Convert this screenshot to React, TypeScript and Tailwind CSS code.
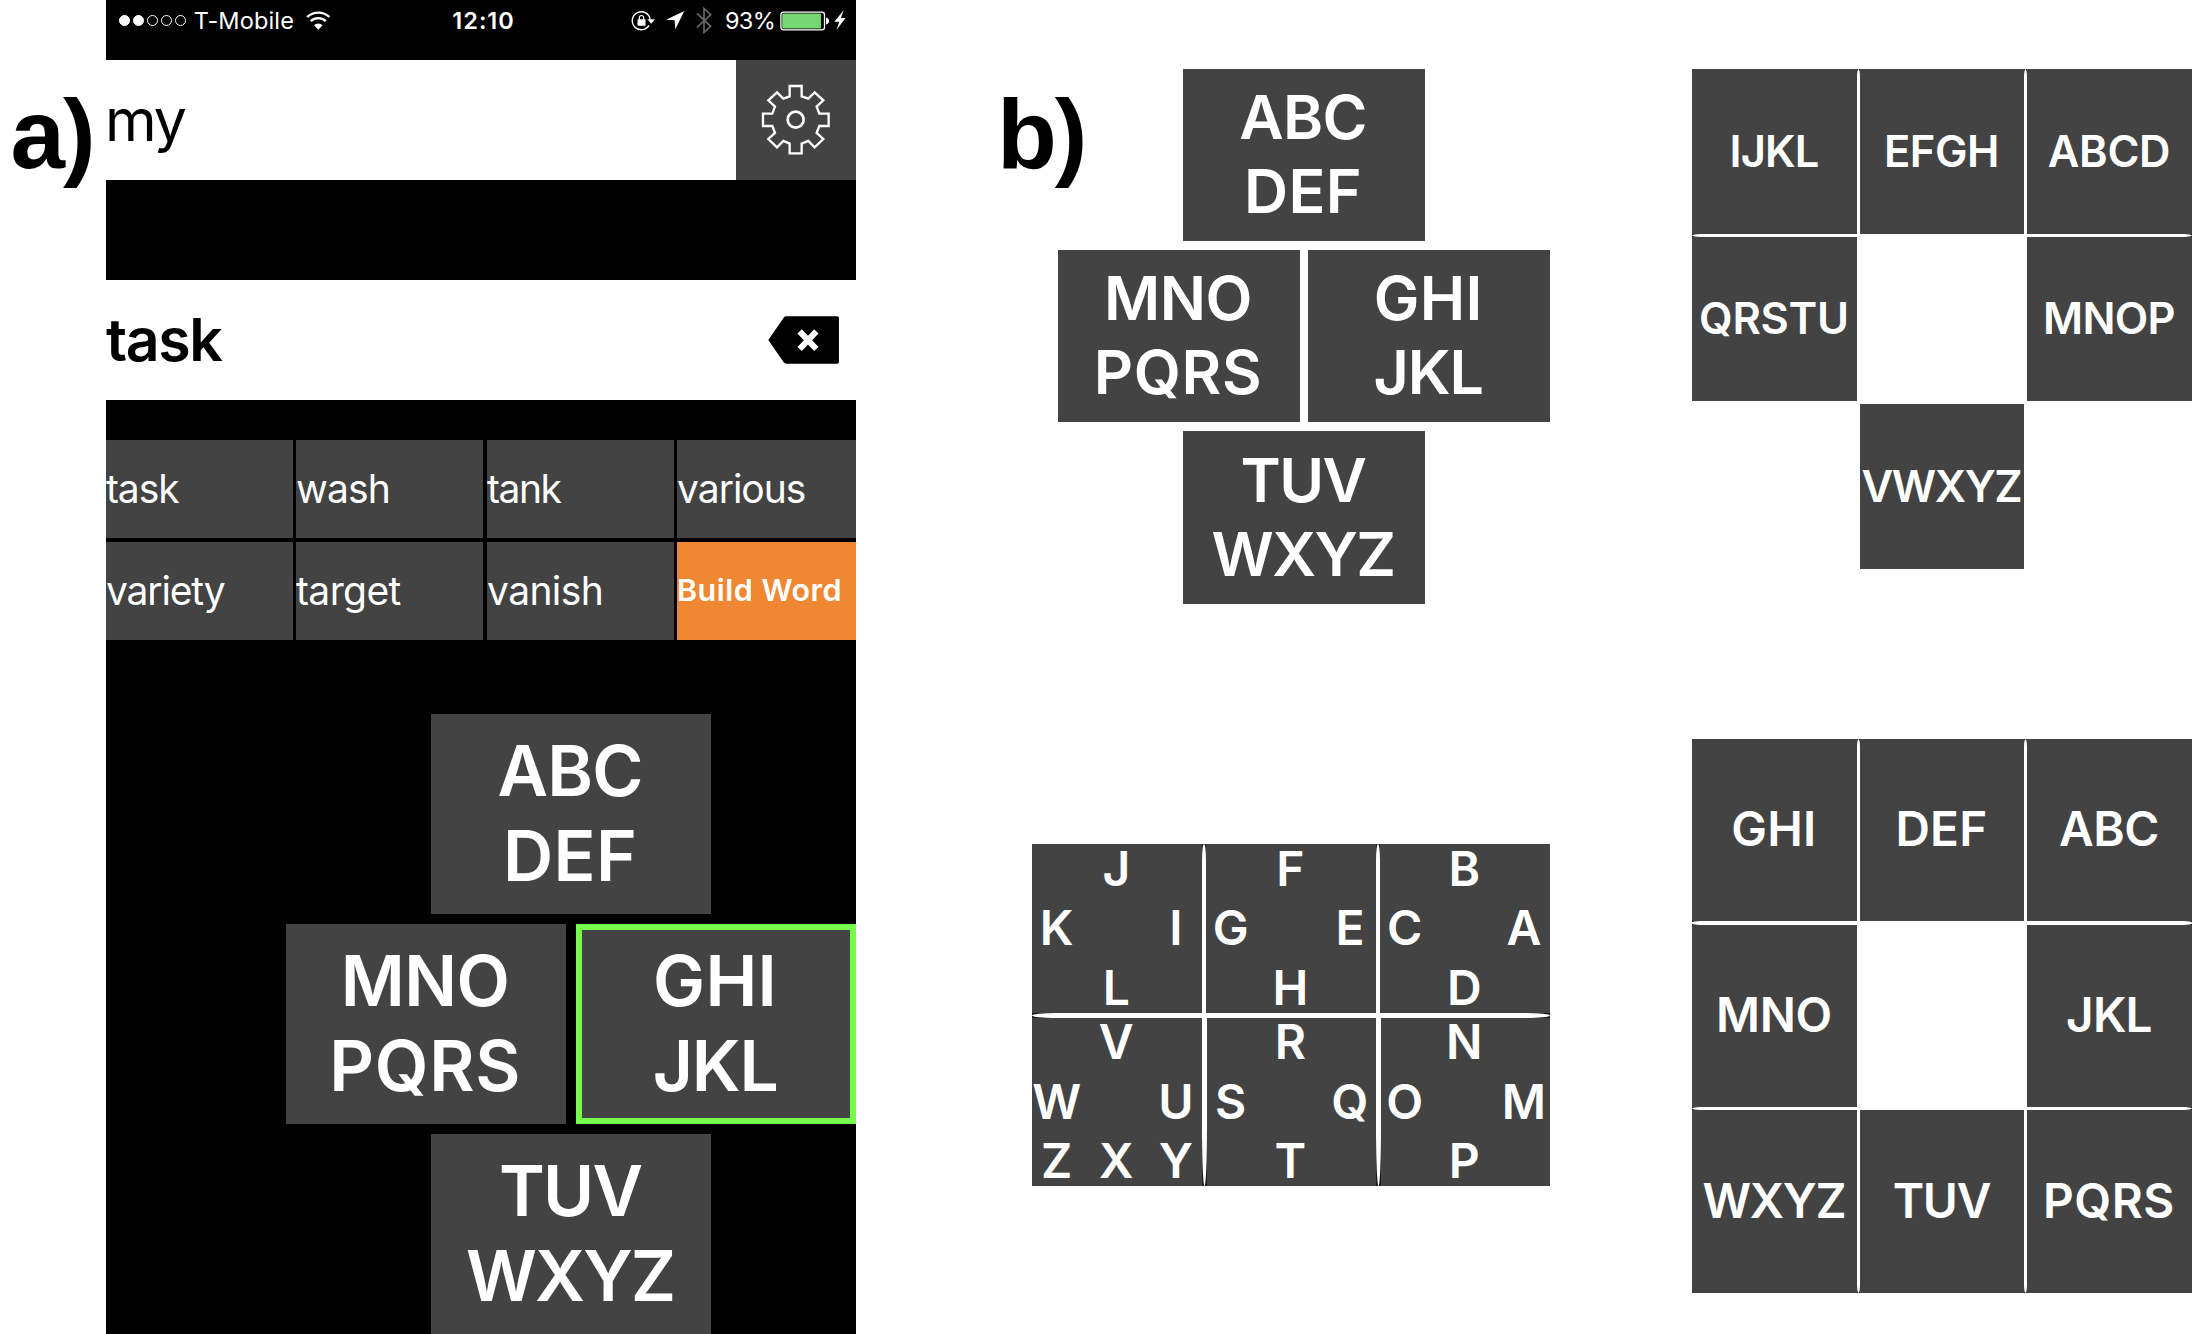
import type { ReactNode } from "react";

const TRACKING: Record<string, string> = {
  ABC: "tracking-[-0.01em]",
  DEF: "tracking-[0.005em]",
  MNO: "tracking-[-0.008em]",
  PQRS: "tracking-[0.01em]",
  GHI: "tracking-[0.005em]",
  JKL: "tracking-[-0.017em]",
  TUV: "tracking-[-0.026em]",
  WXYZ: "tracking-[-0.027em]",
  IJKL: "tracking-[-0.02em]",
  EFGH: "tracking-[-0.011em]",
  ABCD: "tracking-[-0.008em]",
  QRSTU: "tracking-[-0.006em]",
  MNOP: "tracking-[-0.017em]",
  VWXYZ: "tracking-[-0.032em]",
};

function Letters({ text }: { text: string }) {
  return <span className={`whitespace-nowrap ${TRACKING[text] ?? "tracking-normal"}`}>{text}</span>;
}

function Tile({ lines, className = "" }: { lines: string[]; className?: string }) {
  return (
    <div className={`flex shrink-0 flex-col items-center justify-center bg-[#434343] pr-[0.025em] font-semibold text-white ${className}`}>
      {lines.map((line) => (
        <Letters key={line} text={line} />
      ))}
    </div>
  );
}

/* ---------- status bar icons ---------- */

function WifiIcon() {
  return (
    <svg viewBox="19 32 74 57" className="h-[19px] w-[24.6px]" fill="none" stroke="#fff" strokeWidth="7">
      <path d="M22.5 50 A49 49 0 0 1 89.5 50" />
      <path d="M33.5 62.5 A32.5 32.5 0 0 1 78.5 62.5" />
      <path d="M43 75 A18 18 0 0 1 69 75 L56 88 Z" fill="#fff" stroke="none" />
    </svg>
  );
}

function RotationLockIcon() {
  return (
    <svg viewBox="31 28 72 64" className="h-[21.3px] w-6" fill="none" stroke="#fff">
      <path d="M88.5 57 A27 27 0 1 0 85 74" strokeWidth="4" />
      <path d="M80 56 H103 L91.5 69 Z" fill="#fff" stroke="none" />
      <rect x="50.5" y="56" width="24" height="19" rx="2" fill="#fff" stroke="none" />
      <path d="M56 57 V51 A6.5 6.5 0 0 1 69 51 V57" strokeWidth="3.5" />
    </svg>
  );
}

function LocationIcon() {
  return (
    <svg viewBox="138 35 55 55" className="size-[18.3px]" fill="#fff">
      <path d="M193 35 L138 61 L164 63 L166 90 Z" />
    </svg>
  );
}

function BluetoothIcon() {
  return (
    <svg viewBox="227 18 48 86" className="h-[28.6px] w-4" fill="none" stroke="#666" strokeWidth="5">
      <path d="M230 40 L271 79 L251 97 V25 L271 44 L230 82" />
    </svg>
  );
}

function BatteryIcon() {
  return (
    <svg viewBox="0 0 49 20" className="h-5 w-[49px]">
      <rect x="0.9" y="1.1" width="43.6" height="17.8" rx="2.6" fill="none" stroke="#fff" strokeWidth="1.3" />
      <rect x="2.2" y="2.4" width="38.8" height="15.2" rx="1" fill="#76d672" />
      <path d="M46 6.6 Q49 7.4 49 10 Q49 12.6 46 13.4 Z" fill="#fff" />
    </svg>
  );
}

function BoltIcon() {
  return (
    <svg viewBox="644 30 36 61" className="h-[20.3px] w-3" fill="#fff">
      <path d="M673 31 L645 65 H660 L651 90 L679 54 H665 Z" />
    </svg>
  );
}

function GearIcon() {
  return (
    <svg viewBox="990 250 214 220" className="h-[73.3px] w-[71.3px]" fill="none" stroke="#fff" strokeWidth="7">
      <path d="M1079 259 H1115 V290 L1135 297 L1154 278 L1180 302 L1160 321 L1168 342 H1196 V379 H1168 L1160 400 L1180 418 L1154 443 L1135 424 L1115 432 V461 H1079 V432 L1060 424 L1041 443 L1015 418 L1035 400 L1027 379 H999 V342 H1027 L1035 321 L1015 302 L1041 278 L1060 297 L1079 290 Z" />
      <circle cx="1097" cy="360" r="24" strokeWidth="8" />
    </svg>
  );
}

function BackspaceIcon() {
  return (
    <svg viewBox="23 32 214 144" className="h-12 w-[71.3px]">
      <path d="M24 104 L70 37 Q73 33 78 33 H230 Q236 33 236 39 V169 Q236 175 230 175 H78 Q73 175 70 171 Z" fill="#000" />
      <path d="M118 78 L168 131 M168 78 L118 131" stroke="#fff" strokeWidth="18" />
    </svg>
  );
}

/* ---------- phone ---------- */

function StatusBar() {
  return (
    <div className="flex h-[60px] items-start text-[23.5px] leading-[41px] text-white">
      <div className="flex h-[41px] w-[346.3px] items-center pl-[12.6px]">
        <div className="flex gap-[2.7px]">
          {[true, true, false, false, false].map((full, i) => (
            <span
              key={i}
              className={`size-[11.3px] rounded-full border border-white ${full ? "bg-white" : ""}`}
            />
          ))}
        </div>
        <span className="ml-2 w-[112.5px] tracking-[0.14px]">T-Mobile</span>
        <WifiIcon />
      </div>
      <span className="font-semibold tracking-[1px]">12:10</span>
      <div className="flex h-[41px] flex-1 items-center justify-end pr-[9.7px]">
        <RotationLockIcon />
        <span className="w-[11.5px]" />
        <LocationIcon />
        <span className="w-[11.4px]" />
        <BluetoothIcon />
        <span className="mr-[5px] ml-[13px] tracking-[-0.7px]">93%</span>
        <BatteryIcon />
        <span className="w-[5.3px]" />
        <BoltIcon />
      </div>
    </div>
  );
}

const SUGGESTIONS: [string, string][] = [
  ["task", "tracking-[-1.1px]"],
  ["wash", "tracking-[-0.9px]"],
  ["tank", "border-l border-black tracking-[-1.45px]"],
  ["various", "tracking-[-1px]"],
  ["variety", "tracking-[-1.15px]"],
  ["target", "tracking-[-0.6px]"],
  ["vanish", "border-l border-black tracking-[-0.6px]"],
];

function Phone() {
  return (
    <div className="flex h-[1334px] w-[750px] shrink-0 flex-col overflow-hidden bg-black">
      <StatusBar />
      <div className="flex h-[120px] bg-white">
        <div className="flex flex-1 items-center pb-px text-[59px] leading-none tracking-[-2.1px] text-black">
          <span className="-ml-px">my</span>
        </div>
        <div className="flex w-[120px] items-center justify-center bg-[#434343]">
          <GearIcon />
        </div>
      </div>
      <div className="mt-[100px] flex h-[120px] items-center justify-between bg-white pr-[17.2px]">
        <span className="pb-px text-[59px] leading-none font-semibold tracking-[-1.4px] text-black">task</span>
        <BackspaceIcon />
      </div>
      <div className="mt-10 grid grid-cols-[187px_187px_188px_179px] grid-rows-[98px_98px] gap-x-[3px] gap-y-1">
        {SUGGESTIONS.map(([word, style]) => (
          <div key={word} className={`flex items-center bg-[#434343] pb-px text-[39px] leading-none text-white ${style}`}>
            {word}
          </div>
        ))}
        <div className="flex items-center bg-[#ef8733] pb-px text-[30.5px] leading-none font-semibold tracking-[0.5px] whitespace-nowrap text-white">
          Build Word
        </div>
      </div>
      <div className="mt-[74px] flex flex-col gap-[10px] text-[69.5px] leading-[85px]">
        <Tile lines={["ABC", "DEF"]} className="ml-[325px] h-[200px] w-[280px]" />
        <div className="ml-[180px] flex gap-[10px]">
          <Tile lines={["MNO", "PQRS"]} className="h-[200px] w-[280px]" />
          <Tile lines={["GHI", "JKL"]} className="h-[200px] w-[280px] border-[6px] border-[#76fc4c]" />
        </div>
        <Tile lines={["TUV", "WXYZ"]} className="ml-[325px] h-[200px] w-[280px]" />
      </div>
    </div>
  );
}

/* ---------- keyboard layouts ---------- */

function FigureLabel({ children, className = "" }: { children: ReactNode; className?: string }) {
  return (
    <span className={`block font-['Liberation_Sans',sans-serif] text-[98px] leading-[100px] font-bold text-black ${className}`}>
      {children}
    </span>
  );
}

function FourKeyLayout() {
  return (
    <div className="flex flex-col gap-[9px] text-[61px] leading-[73.4px]">
      <div className="flex">
        <FigureLabel className="w-[185.5px] pt-[14.5px] tracking-[-2px]">b)</FigureLabel>
        <Tile lines={["ABC", "DEF"]} className="h-[171.5px] w-[242.5px]" />
      </div>
      <div className="ml-[61px] flex gap-[8.5px]">
        <Tile lines={["MNO", "PQRS"]} className="h-[172.5px] w-[241.5px]" />
        <Tile lines={["GHI", "JKL"]} className="h-[172.5px] w-[242px]" />
      </div>
      <Tile lines={["TUV", "WXYZ"]} className="ml-[185.5px] h-[173px] w-[242.5px]" />
    </div>
  );
}

/* White divider whose ends narrow to a point over the dark keys. */
function Seam({ className, taper }: { className: string; taper: string }) {
  return (
    <div className={`absolute bg-[#1c1c1c] ${className}`}>
      <div className={`size-full bg-white ${taper}`} />
    </div>
  );
}

const SIX_KEYS: string[][] = [
  ["", "J", "", "K", "", "I", "", "L", ""],
  ["", "F", "", "G", "", "E", "", "H", ""],
  ["", "B", "", "C", "", "A", "", "D", ""],
  ["", "V", "", "W", "", "U", "Z", "X", "Y"],
  ["", "R", "", "S", "", "Q", "", "T", ""],
  ["", "N", "", "O", "", "M", "", "P", ""],
];

function SixKeyLayout() {
  return (
    <div className="relative ml-[35px] grid w-[518px] grid-cols-[170px_170px_170px] grid-rows-[168.5px_168.5px] gap-x-[4px] gap-y-[5px] bg-white">
      {SIX_KEYS.map((key, k) => (
        <div
          key={k}
          className="grid grid-cols-[59.6px_59.6px_59.6px] grid-rows-[59.6px_59.6px_59.6px] content-center justify-center bg-[#434343] pr-[1.4px] text-[48px] leading-none font-semibold text-white"
        >
          {key.map((letter, i) => (
            <span key={i} className="flex items-center justify-center">
              {letter}
            </span>
          ))}
        </div>
      ))}
      <Seam className="top-0 left-[170px] h-[170px] w-[4px]" taper="[border-radius:2px_2px_0_0/16px_16px_0_0]" />
      <Seam className="top-0 left-[344px] h-[170px] w-[4px]" taper="[border-radius:2px_2px_0_0/16px_16px_0_0]" />
      <Seam className="top-[172px] left-[169.5px] h-[170px] w-[5px]" taper="[border-radius:0_0_2.5px_2.5px/0_0_60px_60px]" />
      <Seam className="top-[172px] left-[343.5px] h-[170px] w-[5px]" taper="[border-radius:0_0_2.5px_2.5px/0_0_60px_60px]" />
      <Seam className="top-[168.5px] left-0 h-[5px] w-[518px]" taper="[border-radius:24px/2.5px]" />
    </div>
  );
}

function SevenKeyLayout() {
  return (
    <div className="relative grid grid-cols-[165px_164px_165px] grid-rows-[164.5px_164.5px_164.5px] gap-[3px] text-[43.5px] leading-none">
      {["IJKL", "EFGH", "ABCD", "QRSTU", "", "MNOP", "", "VWXYZ", ""].map((keys, i) =>
        keys ? <Tile key={i} lines={[keys]} /> : <div key={i} />,
      )}
      <Seam className="top-0 left-[165px] h-[165px] w-[3px]" taper="[border-radius:1.5px_1.5px_0_0/8px_8px_0_0]" />
      <Seam className="top-0 left-[332px] h-[165px] w-[3px]" taper="[border-radius:1.5px_1.5px_0_0/8px_8px_0_0]" />
      <Seam className="top-[164.5px] left-0 h-[3px] w-[500px]" taper="[border-radius:8px/1.5px]" />
    </div>
  );
}

function EightKeyLayout() {
  return (
    <div className="relative grid grid-cols-[165px_164px_165px] grid-rows-[182.5px_182.5px_182.5px] gap-x-[3px] gap-y-[3.3px] text-[47.7px] leading-none">
      {["GHI", "DEF", "ABC", "MNO", "", "JKL", "WXYZ", "TUV", "PQRS"].map((keys, i) =>
        keys ? <Tile key={i} lines={[keys]} /> : <div key={i} />,
      )}
      <Seam className="top-0 left-[165px] h-[554px] w-[3px]" taper="[border-radius:1.5px/8px]" />
      <Seam className="top-0 left-[332px] h-[554px] w-[3px]" taper="[border-radius:1.5px/8px]" />
      <Seam className="top-[182.5px] left-0 h-[3.3px] w-[500px]" taper="[border-radius:8px/1.6px]" />
      <Seam className="top-[368.3px] left-0 h-[3.3px] w-[500px]" taper="[border-radius:8px/1.6px]" />
    </div>
  );
}

export default function App() {
  return (
    <main className="flex h-[1334px] w-[2192px] overflow-hidden bg-white font-['Inter',sans-serif]">
      <div className="w-[106px] shrink-0 pt-[84px] pl-[10.5px]">
        <FigureLabel className="tracking-[-2px]">a)</FigureLabel>
      </div>
      <Phone />
      <div className="ml-[141px] flex w-[695px] shrink-0 flex-col gap-[240px] pt-[69px]">
        <FourKeyLayout />
        <SixKeyLayout />
      </div>
      <div className="flex shrink-0 flex-col gap-[170.3px] pt-[69px]">
        <SevenKeyLayout />
        <EightKeyLayout />
      </div>
    </main>
  );
}
